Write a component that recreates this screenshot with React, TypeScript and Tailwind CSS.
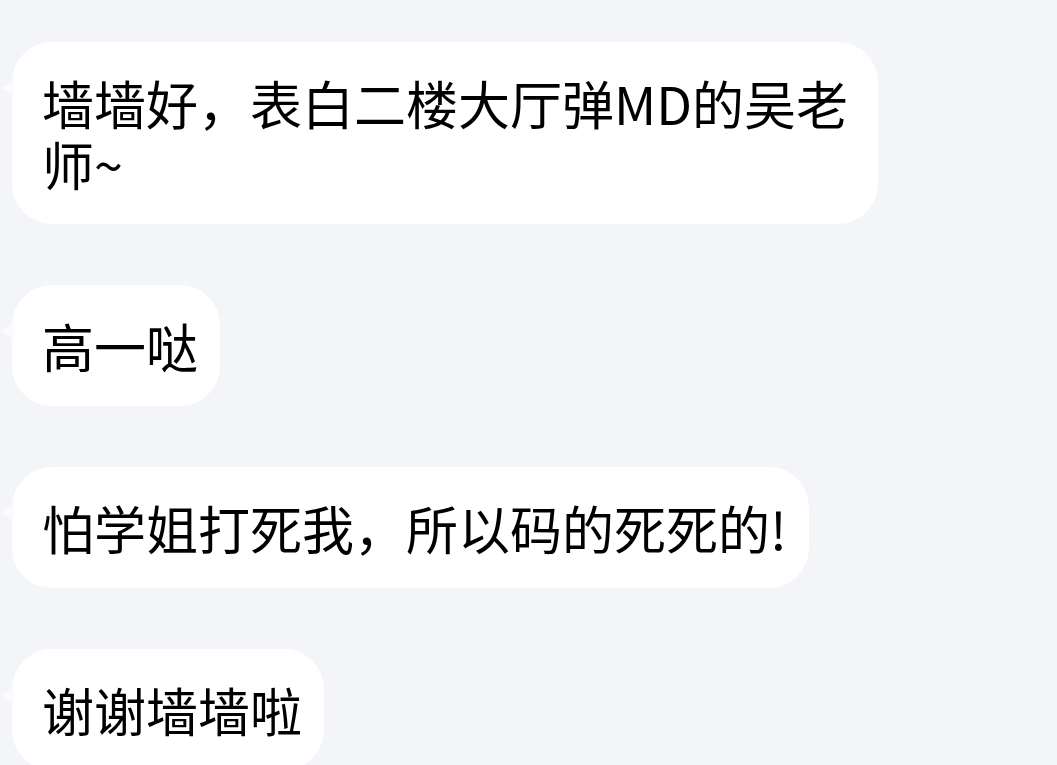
import React from 'react';

const messages = [
  '墙墙好，表白二楼大厅弹MD的吴老师~',
  '高一哒',
  '怕学姐打死我，所以码的死死的!',
  '谢谢墙墙啦',
];

const Bubble: React.FC<{ text: string }> = ({ text }) => (
  <div className="relative self-start">
    {/* little tail on the left */}
    <svg className="absolute left-[-12px] top-[36px]" width="14" height="20" viewBox="0 0 14 20">
      <path d="M14 0 C10 5 5 8 0 10 C5 12 10 15 14 20 Z" fill="#fbfbfd" />
    </svg>
    <div className="max-w-[866px] rounded-[40px] bg-white pl-[30px] pr-[22px] py-[30px] text-[52px] font-normal leading-[61px] text-black">
      {text}
    </div>
  </div>
);

export default function App() {
  return (
    <div
      className="h-[765px] w-[1057px] overflow-hidden bg-[#f4f5f9] pl-[12px] pt-[42px]"
      style={{ fontFamily: '"Noto Sans CJK SC", "Noto Sans", sans-serif' }}
    >
      <div className="flex flex-col gap-[61px]">
        {messages.map((m, i) => (
          <Bubble key={i} text={m} />
        ))}
      </div>
    </div>
  );
}
